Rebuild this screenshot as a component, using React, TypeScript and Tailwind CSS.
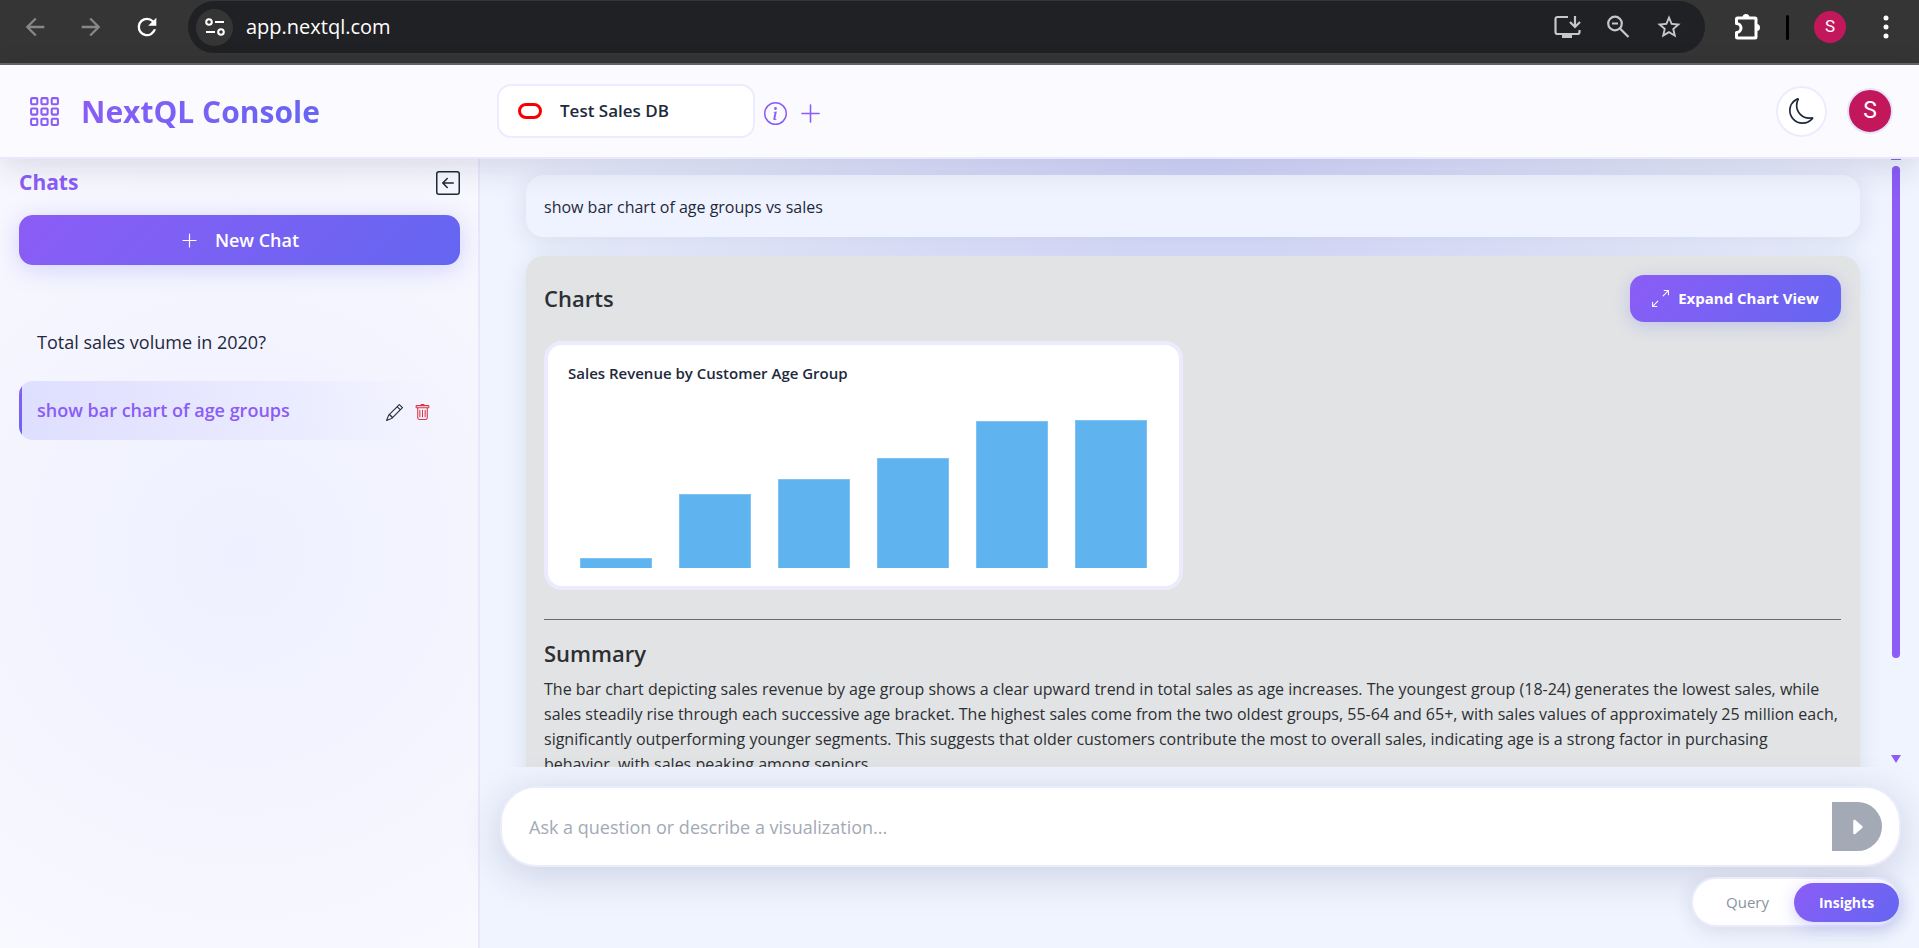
import React from "react";
import { BsGrid3X3Gap, BsInfoCircle, BsPlusLg, BsMoon, BsPencil, BsArrowLeftSquare, BsArrowsAngleExpand, BsCaretRightFill, BsTrash } from "react-icons/bs";

function BrowserBar() {
  return (
    <div className="flex h-[65px] shrink-0 items-start border-b-2 border-[#666666] bg-[#353535] pt-px text-white">
      <div className="flex h-[52px] w-[188px] shrink-0 items-center gap-7 pl-[21px]">
        <button type="button" aria-label="Back" className="text-[#878787]">
          <svg width="28" height="28" viewBox="0 0 24 24" fill="currentColor"><path d="M20 11H7.83l5.59-5.59L12 4l-8 8 8 8 1.41-1.41L7.83 13H20v-2z" /></svg>
        </button>
        <button type="button" aria-label="Forward" className="text-[#878787]">
          <svg width="28" height="28" viewBox="0 0 24 24" fill="currentColor"><path d="M12 4l-1.41 1.41L16.17 11H4v2h12.17l-5.58 5.59L12 20l8-8z" /></svg>
        </button>
        <button type="button" aria-label="Reload" className="text-white">
          <svg width="28" height="28" viewBox="0 0 24 24" fill="currentColor"><path d="M17.65 6.35A7.96 7.96 0 0 0 12 4a8 8 0 1 0 7.73 10h-2.08A6 6 0 1 1 12 6c1.66 0 3.14.69 4.22 1.78L13 11h7V4l-2.35 2.35z" /></svg>
        </button>
      </div>
      <div className="flex h-[52px] grow items-center rounded-full bg-[#202124] pl-2 pr-[22px]">
        <button type="button" aria-label="Site information" className="flex size-[37px] items-center justify-center rounded-full bg-[#353535]">
          <svg width="20" height="18" viewBox="0 0 20 18" fill="none" stroke="#fff" strokeWidth="2"><circle cx="4" cy="4" r="2.8" /><path d="M10 4h9M1 14h9" /><circle cx="16" cy="14" r="2.8" /></svg>
        </button>
        <span className="ml-[13px] grow text-[20px]">app.nextql.com</span>
        <div className="flex items-center gap-6 text-[#c7c7c7]">
          <svg width="28" height="26" viewBox="0 0 28 26" fill="none" stroke="currentColor" strokeWidth="2.2"><path d="M15 3H4.5A2 2 0 0 0 2.5 5v13a2 2 0 0 0 2 2h20a2 2 0 0 0 2-2v-2M22 2v10M17 8l5 5 5-5" /><path d="M9 21h10v3H9z" fill="currentColor" stroke="none" /></svg>
          <svg width="26" height="26" viewBox="0 0 26 26" fill="none" stroke="currentColor" strokeWidth="2.2"><circle cx="10" cy="9.5" r="6.8" /><path d="M15 14.5l8.5 8.5M7 9.5h6" /></svg>
          <svg width="28" height="28" viewBox="0 0 24 24" fill="currentColor"><path d="M22 9.24l-7.19-.62L12 2 9.19 8.63 2 9.24l5.46 4.73L5.82 21 12 17.27 18.18 21l-1.63-7.03L22 9.24zM12 15.4l-3.76 2.27 1-4.28-3.32-2.88 4.38-.38L12 6.1l1.71 4.04 4.38.38-3.32 2.88 1 4.28L12 15.4z" /></svg>
        </div>
      </div>
      <div className="flex h-[52px] w-[214px] shrink-0 items-center pl-7">
        <svg width="28" height="28" viewBox="0 0 28 28" fill="none" stroke="#fff" strokeWidth="3" strokeLinejoin="round">
          <path d="M4.5 5H22a1 1 0 0 1 1 1v18a1 1 0 0 1-1 1H4.5a1 1 0 0 1-1-1v-4.5a4.5 4.5 0 0 0 0-9V6a1 1 0 0 1 1-1z" />
          <path d="M9.5 4.5a3.5 3.5 0 0 1 7 0zM23.5 11a3.5 3.5 0 0 1 0 7z" fill="#fff" stroke="none" />
        </svg>
        <span className="ml-[25px] h-[25px] w-[3px] rounded-full bg-black" />
        <span className="ml-[25px] flex size-8 items-center justify-center rounded-full bg-[#c2185b] font-[Roboto,sans-serif] text-[17px]">S</span>
        <svg className="ml-[37px]" width="6" height="24" viewBox="0 0 6 24" fill="#fff"><circle cx="3" cy="3" r="2.5" /><circle cx="3" cy="12" r="2.5" /><circle cx="3" cy="21" r="2.5" /></svg>
      </div>
    </div>
  );
}

function Header() {
  return (
    <header className="relative z-10 flex h-[94px] shrink-0 items-center border-b-2 border-[#e8e7fc] bg-[#fbfbff] pr-[26px] shadow-[0_8px_32px_rgba(31,38,80,0.14)]">
      <div className="flex w-[497px] shrink-0 items-center gap-5 pl-7 text-[#8b5cf6]">
        <BsGrid3X3Gap size={33} />
        <h1 className="bg-linear-135 from-[#8b5cf6] to-[#6366f1] bg-clip-text text-[30px] font-bold text-transparent">NextQL Console</h1>
      </div>
      <button type="button" className="flex h-[54px] w-[258px] items-center gap-[18px] rounded-[14px] border-2 border-[#edebfe] bg-white pl-[19px] text-[17px] font-semibold text-[#1e293b]">
        <svg width="24" height="16" viewBox="0 0 24 16" fill="none" stroke="#f80000" strokeWidth="3"><rect x="1.5" y="1.5" width="21" height="13" rx="6.5" /></svg>
        Test Sales DB
      </button>
      <div className="flex items-center gap-[11px] pl-[9px] pt-1 text-[#8b5cf6]">
        <button type="button" aria-label="Database information"><BsInfoCircle size={23} /></button>
        <button type="button" aria-label="Add database"><BsPlusLg size={25} /></button>
      </div>
      <div className="ml-auto flex items-center gap-5">
        <button type="button" aria-label="Dark mode" className="flex size-[51px] items-center justify-center rounded-full border-2 border-[#edebfe] bg-white text-[#1e293b]"><BsMoon size={26} /></button>
        <button type="button" aria-label="Account" className="flex size-[46px] items-center justify-center rounded-full border-2 border-[#e5e3fb] bg-[#c2185b] font-[Roboto,sans-serif] text-[23px] text-white">S</button>
      </div>
    </header>
  );
}

function Sidebar() {
  return (
    <aside className="flex w-[480px] shrink-0 flex-col border-r-2 border-[#e8e7fc] bg-[radial-gradient(circle_at_50%_50%,#eef0ff_0%,#f5f5ff_60%,#f8f8ff_100%)] pl-[19px] pr-[18px] pt-2">
      <div className="flex h-8 items-center justify-between">
        <h2 className="text-[21px] font-bold text-[#8b5cf6]">Chats</h2>
        <button type="button" aria-label="Collapse chats" className="text-[#1e293b]"><BsArrowLeftSquare size={24} /></button>
      </div>
      <button type="button" className="mt-4 flex h-[50px] shrink-0 items-center justify-center gap-4 rounded-[14px] bg-linear-135 from-[#8b5cf6] to-[#6366f1] text-[18px] font-semibold text-white shadow-[0_4px_24px_rgba(99,102,241,0.25)]">
        <BsPlusLg size={19} />
        New Chat
      </button>
      <nav className="mt-12 flex flex-col gap-[9px]">
        <a href="#total" className="flex h-[59px] items-center px-[18px] text-[18px] text-[#1e293b]">Total sales volume in 2020?</a>
        <div className="relative flex h-[59px] items-center overflow-hidden rounded-[14px] bg-gradient-to-r from-[#dedeff] to-transparent to-95% pl-[18px] pr-[29px]">
          <span className="absolute inset-y-0 left-0 w-[3px] bg-gradient-to-b from-[#8b5cf6] to-[#6366f1]" />
          <a href="#ages" className="grow text-[18px] font-semibold text-[#8b5cf6]">show bar chart of age groups</a>
          <button type="button" aria-label="Rename chat" className="pt-1 text-[#1e293b]"><BsPencil size={17} /></button>
          <button type="button" aria-label="Delete chat" className="ml-[11px] pt-1 text-[#dc3545]"><BsTrash size={17} /></button>
        </div>
      </nav>
    </aside>
  );
}

const sales = [10, 74, 89, 110, 147, 148];

function Conversation() {
  return (
    <div className="flex min-h-0 grow">
      <div className="flex min-w-0 grow flex-col gap-[19px] overflow-hidden pl-[46px] pr-[31px] pt-4">
        <div className="flex h-[62px] shrink-0 items-center rounded-[18px] bg-[#eff3ff] px-[18px] pt-0.5 text-[16px] text-[#1e293b] shadow-[0_4px_24px_rgba(31,38,80,0.10)]">show bar chart of age groups vs sales</div>
        <section className="shrink-0 rounded-[18px] bg-[#e1e3e5] pb-8 pl-[18px] pr-[19px] pt-[19px] text-[#2d2f33] shadow-[0_4px_24px_rgba(31,38,80,0.10)]">
          <div className="flex h-[47px] items-center justify-between">
            <h3 className="text-[22px] font-semibold">Charts</h3>
            <button type="button" className="flex h-full w-[211px] items-center justify-center gap-[9px] rounded-[14px] bg-linear-135 from-[#8b5cf6] to-[#6366f1] text-[15px] font-bold text-white shadow-[0_4px_16px_rgba(99,102,241,0.25)]">
              <BsArrowsAngleExpand size={17} />
              Expand Chart View
            </button>
          </div>
          <div className="mt-[19px] h-[249px] w-[639px] rounded-[18px] border-4 border-[#ecebfe] bg-white px-5 pt-[18px]">
            <h4 className="text-[15px] leading-5 font-semibold text-[#1e293b]">Sales Revenue by Customer Age Group</h4>
            <div className="mt-[37px] flex h-[148px] items-end gap-[27px] px-3">
              {sales.map((v, i) => (
                <div key={i} className="grow border border-b-0 border-[#7fc3f4] bg-[#5fb4f0]" style={{ height: v }} />
              ))}
            </div>
          </div>
          <hr className="mt-[29px] border-[#6b6b70]" />
          <h3 className="mt-[17px] text-[22px] leading-8 font-semibold">Summary</h3>
          <p className="mt-2 text-[16px] leading-[25px]">
            The bar chart depicting sales revenue by age group shows a clear upward trend in total sales as age increases. The youngest group (18-24) generates the lowest sales, while sales steadily rise through each successive age bracket. The highest sales come from the two oldest groups, 55-64 and 65+, with sales values of approximately 25 million each, significantly outperforming younger segments. This suggests that older customers contribute the most to overall sales, indicating age is a strong factor in purchasing behavior, with sales peaking among seniors.
          </p>
        </section>
      </div>
      <div className="mr-[18px] flex w-[10px] shrink-0 flex-col items-center">
        <span className="h-px w-[10px] bg-[#8b5cf6]" />
        <span className="mt-[6px] h-[492px] w-2 rounded-full bg-[#8b5cf6]" />
        <svg className="mb-1 mt-auto" width="10" height="8" viewBox="0 0 10 8"><path d="M0 0h10L5 8z" fill="#8b5cf6" /></svg>
      </div>
    </div>
  );
}

function Composer() {
  return (
    <div className="flex shrink-0 flex-col items-end gap-[10px] pb-[21px] pl-5 pr-[18px] pt-[19px]">
      <form className="flex h-[81px] w-full items-center rounded-[36px] border-2 border-[#ecebfc] bg-white pl-[27px] pr-[17px] shadow-[0_8px_40px_rgba(31,38,80,0.17)]">
        <input aria-label="Question" placeholder="Ask a question or describe a visualization..." className="h-12 min-w-0 grow bg-transparent text-[18px] outline-none placeholder:text-[#a3aab6]" />
        <button type="button" aria-label="Send" className="flex h-[49px] w-[50px] items-center justify-center rounded-r-full bg-[#a3aab5] text-white"><BsCaretRightFill size={20} /></button>
      </form>
      <div className="flex h-[50px] w-[210px] items-center rounded-full border-2 border-[#ecebfc] bg-white shadow-[0_4px_20px_rgba(31,38,80,0.12)]">
        <button type="button" className="grow pl-2 text-[15px] text-[#8a92a3]">Query</button>
        <button type="button" className="h-[39px] w-[105px] rounded-full bg-linear-135 from-[#8b5cf6] to-[#6366f1] text-[14px] font-bold text-white shadow-[0_4px_16px_rgba(99,102,241,0.3)]">Insights</button>
      </div>
    </div>
  );
}

export default function App() {
  return (
    <div className="flex h-screen flex-col overflow-hidden font-['Open_Sans','Noto_Sans',sans-serif]">
      <BrowserBar />
      <Header />
      <div className="flex min-h-0 grow">
        <Sidebar />
        <main className="flex min-w-0 grow flex-col bg-[#eff4ff] bg-[radial-gradient(ellipse_50%_50%_at_50%_0%,#d4d8fc_0%,#eff4ff_100%)]">
          <Conversation />
          <Composer />
        </main>
      </div>
    </div>
  );
}
